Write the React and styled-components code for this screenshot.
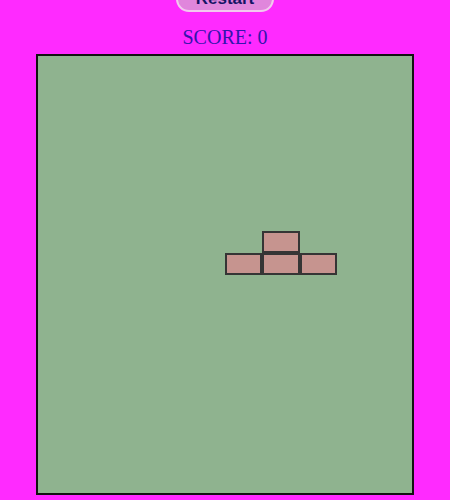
import React, { useState } from "react";
import styled, { createGlobalStyle } from "styled-components";

const GlobalStyle = createGlobalStyle`
  html, body {
    margin: 0;
    padding: 0;
    background-color: #ff2aff;
    overflow: hidden;
  }
`;

const COLS = 10;
const ROWS = 20;

const Page = styled.div`
  display: flex;
  flex-direction: column;
  align-items: center;
  height: 500px;
`;

const RestartButton = styled.button`
  margin-top: -14px;
  width: 98px;
  height: 26px;
  background-color: #e086dc;
  border: 2px solid #f2c8ee;
  border-radius: 13px;
  color: #141464;
  font-family: "Liberation Sans", Arial, sans-serif;
  font-weight: bold;
  font-size: 17px;
  padding: 0;
  cursor: pointer;
`;

const Score = styled.div`
  margin-top: 14px;
  font-family: "Liberation Serif", "Times New Roman", serif;
  font-size: 20px;
  line-height: 23px;
  color: #3414ac;
`;

const Board = styled.div`
  margin-top: 5px;
  width: 374px;
  height: 437px;
  border: 2px solid #111;
  background-color: #8fb38f;
  display: grid;
  grid-template-columns: repeat(${COLS}, 1fr);
  grid-template-rows: repeat(${ROWS}, 1fr);
`;

const Cell = styled.div`
  box-sizing: border-box;
  background-color: ${(p) => (p.$filled ? "#c6948f" : "transparent")};
  border: ${(p) => (p.$filled ? "2px solid #353535" : "none")};
`;

const piece = [
  [8, 6],
  [9, 5],
  [9, 6],
  [9, 7],
];

function App() {
  const [score, setScore] = useState(0);

  const isFilled = (r, c) => piece.some(([pr, pc]) => pr === r && pc === c);

  const cells = [];
  for (let r = 0; r < ROWS; r++) {
    for (let c = 0; c < COLS; c++) {
      cells.push(<Cell key={`${r}-${c}`} $filled={isFilled(r, c)} />);
    }
  }

  return (
    <Page>
      <GlobalStyle />
      <RestartButton onClick={() => setScore(0)}>Restart</RestartButton>
      <Score>SCORE: {score}</Score>
      <Board>{cells}</Board>
    </Page>
  );
}

export default App;
